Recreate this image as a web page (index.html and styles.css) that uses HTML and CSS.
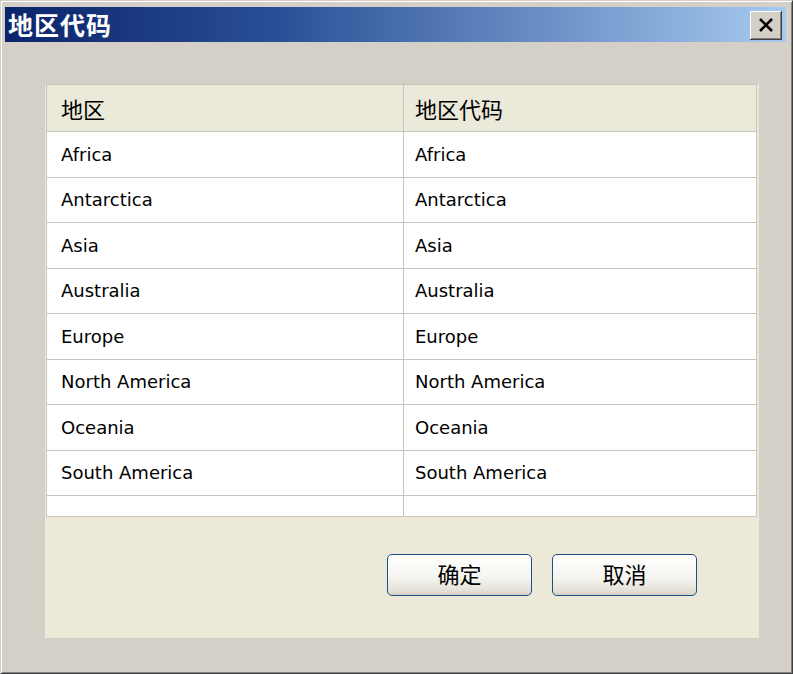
FILE: index.html
```html
<!DOCTYPE html>
<html>
<head>
    <title>地区代码</title>
    <link rel="stylesheet" href="styles.css">
</head>
<body>
    <div class="window">
        <div class="titlebar">
            <span class="title">地区代码</span>
            <button class="close-btn" title="关闭">
                <svg width="16" height="14" viewBox="0 0 16 14">
                    <path d="M2 1 L14 13 M14 1 L2 13" stroke="#000" stroke-width="2.6" fill="none"/>
                </svg>
            </button>
        </div>
        <div class="content">
            <div class="panel">
                <table class="grid">
                    <thead>
                        <tr>
                            <th class="col-name">地区</th>
                            <th class="col-code">地区代码</th>
                        </tr>
                    </thead>
                    <tbody>
                        <tr><td>Africa</td><td>Africa</td></tr>
                        <tr><td>Antarctica</td><td>Antarctica</td></tr>
                        <tr><td>Asia</td><td>Asia</td></tr>
                        <tr><td>Australia</td><td>Australia</td></tr>
                        <tr><td>Europe</td><td>Europe</td></tr>
                        <tr><td>North America</td><td>North America</td></tr>
                        <tr><td>Oceania</td><td>Oceania</td></tr>
                        <tr><td>South America</td><td>South America</td></tr>
                        <tr class="empty-row"><td></td><td></td></tr>
                    </tbody>
                </table>
                <div class="buttons">
                    <button class="dlg-btn">确定</button>
                    <button class="dlg-btn">取消</button>
                </div>
            </div>
        </div>
    </div>
</body>
</html>
```

FILE: styles.css
```css
html, body {
    margin: 0;
    padding: 0;
}
body {
    width: 793px;
    height: 674px;
    background: #d4d0c8;
    font-family: "DejaVu Sans", "Noto Sans CJK SC", sans-serif;
    overflow: hidden;
}
.window {
    width: 793px;
    height: 674px;
    box-sizing: border-box;
    background: #d4d0c8;
    border-top: 1px solid #d4d0c8;
    border-left: 1px solid #d4d0c8;
    border-right: 1px solid #404040;
    border-bottom: 1px solid #404040;
    box-shadow: inset 1px 1px 0 #ffffff, inset -1px -1px 0 #808080;
    padding: 5px 6px 0 4px;
}
.titlebar {
    height: 35px;
    margin-top: 1px;
    display: flex;
    align-items: center;
    justify-content: space-between;
    background: linear-gradient(to right, #0a246a 0%, #2a4f96 35%, #a6caf0 100%);
    padding: 0 4px 0 3px;
}
.title {
    color: #fff;
    font-family: "Noto Sans CJK SC", sans-serif;
    font-weight: bold;
    font-size: 25px;
    letter-spacing: 1px;
    line-height: 1;
}
.close-btn {
    width: 32px;
    height: 29px;
    padding: 0;
    margin-top: 1px;
    background: #d4d0c8;
    border: none;
    border-right: 1px solid #404040;
    border-bottom: 1px solid #404040;
    box-shadow: inset 1px 1px 0 #ffffff, inset -1px -1px 0 #808080;
    display: flex;
    align-items: center;
    justify-content: center;
}
.content {
    padding: 42px 27px 0 40px;
}
.panel {
    width: 714px;
    height: 554px;
    background: #ece9d8;
    box-sizing: border-box;
    padding: 0 2px 0 1px;
}
.grid {
    width: 711px;
    border-collapse: collapse;
    background: #fff;
    table-layout: fixed;
}
.grid th,
.grid td {
    border: 1px solid #c8c6bc;
    text-align: left;
    padding: 0 0 0 14px;
    font-weight: normal;
    color: #000;
    white-space: nowrap;
}
.grid th {
    background: #ebe9da;
    height: 46px;
    font-family: "Noto Sans CJK SC", sans-serif;
    font-size: 22px;
}
.grid td {
    height: 44.5px;
    font-size: 18px;
}
.grid .col-name {
    width: 342px;
}
.grid .col-code {
    padding-left: 11px;
}
.grid td + td {
    padding-left: 11px;
}
.grid .empty-row td {
    height: 20px;
}
.buttons {
    display: flex;
    justify-content: flex-end;
    gap: 20px;
    margin-top: 37px;
    padding-right: 60px;
}
.dlg-btn {
    width: 145px;
    height: 42px;
    border: 1px solid #1c4f86;
    border-radius: 5px;
    background: linear-gradient(to bottom, #ffffff 0%, #f4f3ee 60%, #e3e0d6 90%, #d6d0c5 100%);
    font-family: "Noto Sans CJK SC", sans-serif;
    font-size: 22px;
    line-height: 1;
    color: #000;
    padding: 0 0 4px 0;
}
```
